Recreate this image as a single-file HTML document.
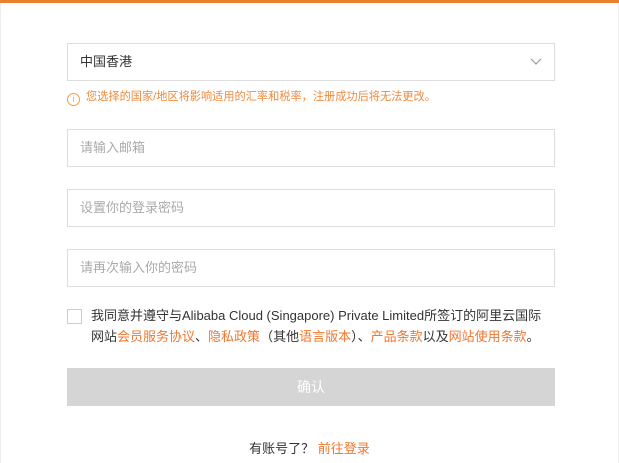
<!DOCTYPE html>
<html><head><meta charset="utf-8"><style>
*{margin:0;padding:0;box-sizing:border-box}
body{width:619px;height:463px;background:#fff;font-family:"Liberation Sans","Noto Sans CJK SC",sans-serif;position:relative;overflow:hidden}
.bl{position:absolute;top:0;bottom:0;width:1px;background:#eee}
.top{position:absolute;left:0;top:0;width:619px;height:3px;background:#e8822f}
.box{position:absolute;left:67px;width:488px;height:38px;border:1px solid #ddd;font-size:13px;line-height:36px;padding-left:12px;color:#aaa}
.sel{top:43px;color:#333}
.hint{position:absolute;left:67px;top:89px;font-size:11.2px;color:#f08a3c;line-height:16px}
.hint i{display:inline-block;width:13px;height:13px;border:1px solid #f0a050;border-radius:50%;font-style:normal;font-size:9px;text-align:center;line-height:11px;vertical-align:-2px;margin-right:6px;color:#f0a050}
.cb{position:absolute;left:67px;top:309px;width:15px;height:15px;border:1px solid #ccc}
.agree{position:absolute;left:91px;top:305px;width:460px;font-size:13px;line-height:21px;color:#333}
.o{color:#f0772f}
.btn{position:absolute;left:67px;top:368px;width:488px;height:38px;background:#d5d5d5;color:#fff;text-align:center;line-height:38px;font-size:14px}
.foot{position:absolute;left:0;width:619px;top:438px;text-align:center;font-size:13px;color:#333}
</style></head><body>
<div class="bl" style="left:0"></div><div class="bl" style="right:0"></div>
<div class="top"></div>
<div class="box sel">中国香港<svg style="position:absolute;right:12px;top:14px" width="12" height="8" viewBox="0 0 12 8"><path d="M1 1L6 6L11 1" fill="none" stroke="#999" stroke-width="1.2"/></svg></div>
<div class="hint"><i>i</i>您选择的国家/地区将影响适用的汇率和税率，注册成功后将无法更改。</div>
<div class="box" style="top:129px">请输入邮箱</div>
<div class="box" style="top:189px">设置你的登录密码</div>
<div class="box" style="top:249px">请再次输入你的密码</div>
<div class="cb"></div>
<div class="agree">我同意并遵守与Alibaba Cloud (Singapore) Private Limited所签订的阿里云国际<br>网站<span class="o">会员服务协议</span>、<span class="o">隐私政策</span>（其他<span class="o">语言版本</span>）、<span class="o">产品条款</span>以及<span class="o">网站使用条款</span>。</div>
<div class="btn">确认</div>
<div class="foot">有账号了？ <span class="o">前往登录</span></div>
</body></html>
